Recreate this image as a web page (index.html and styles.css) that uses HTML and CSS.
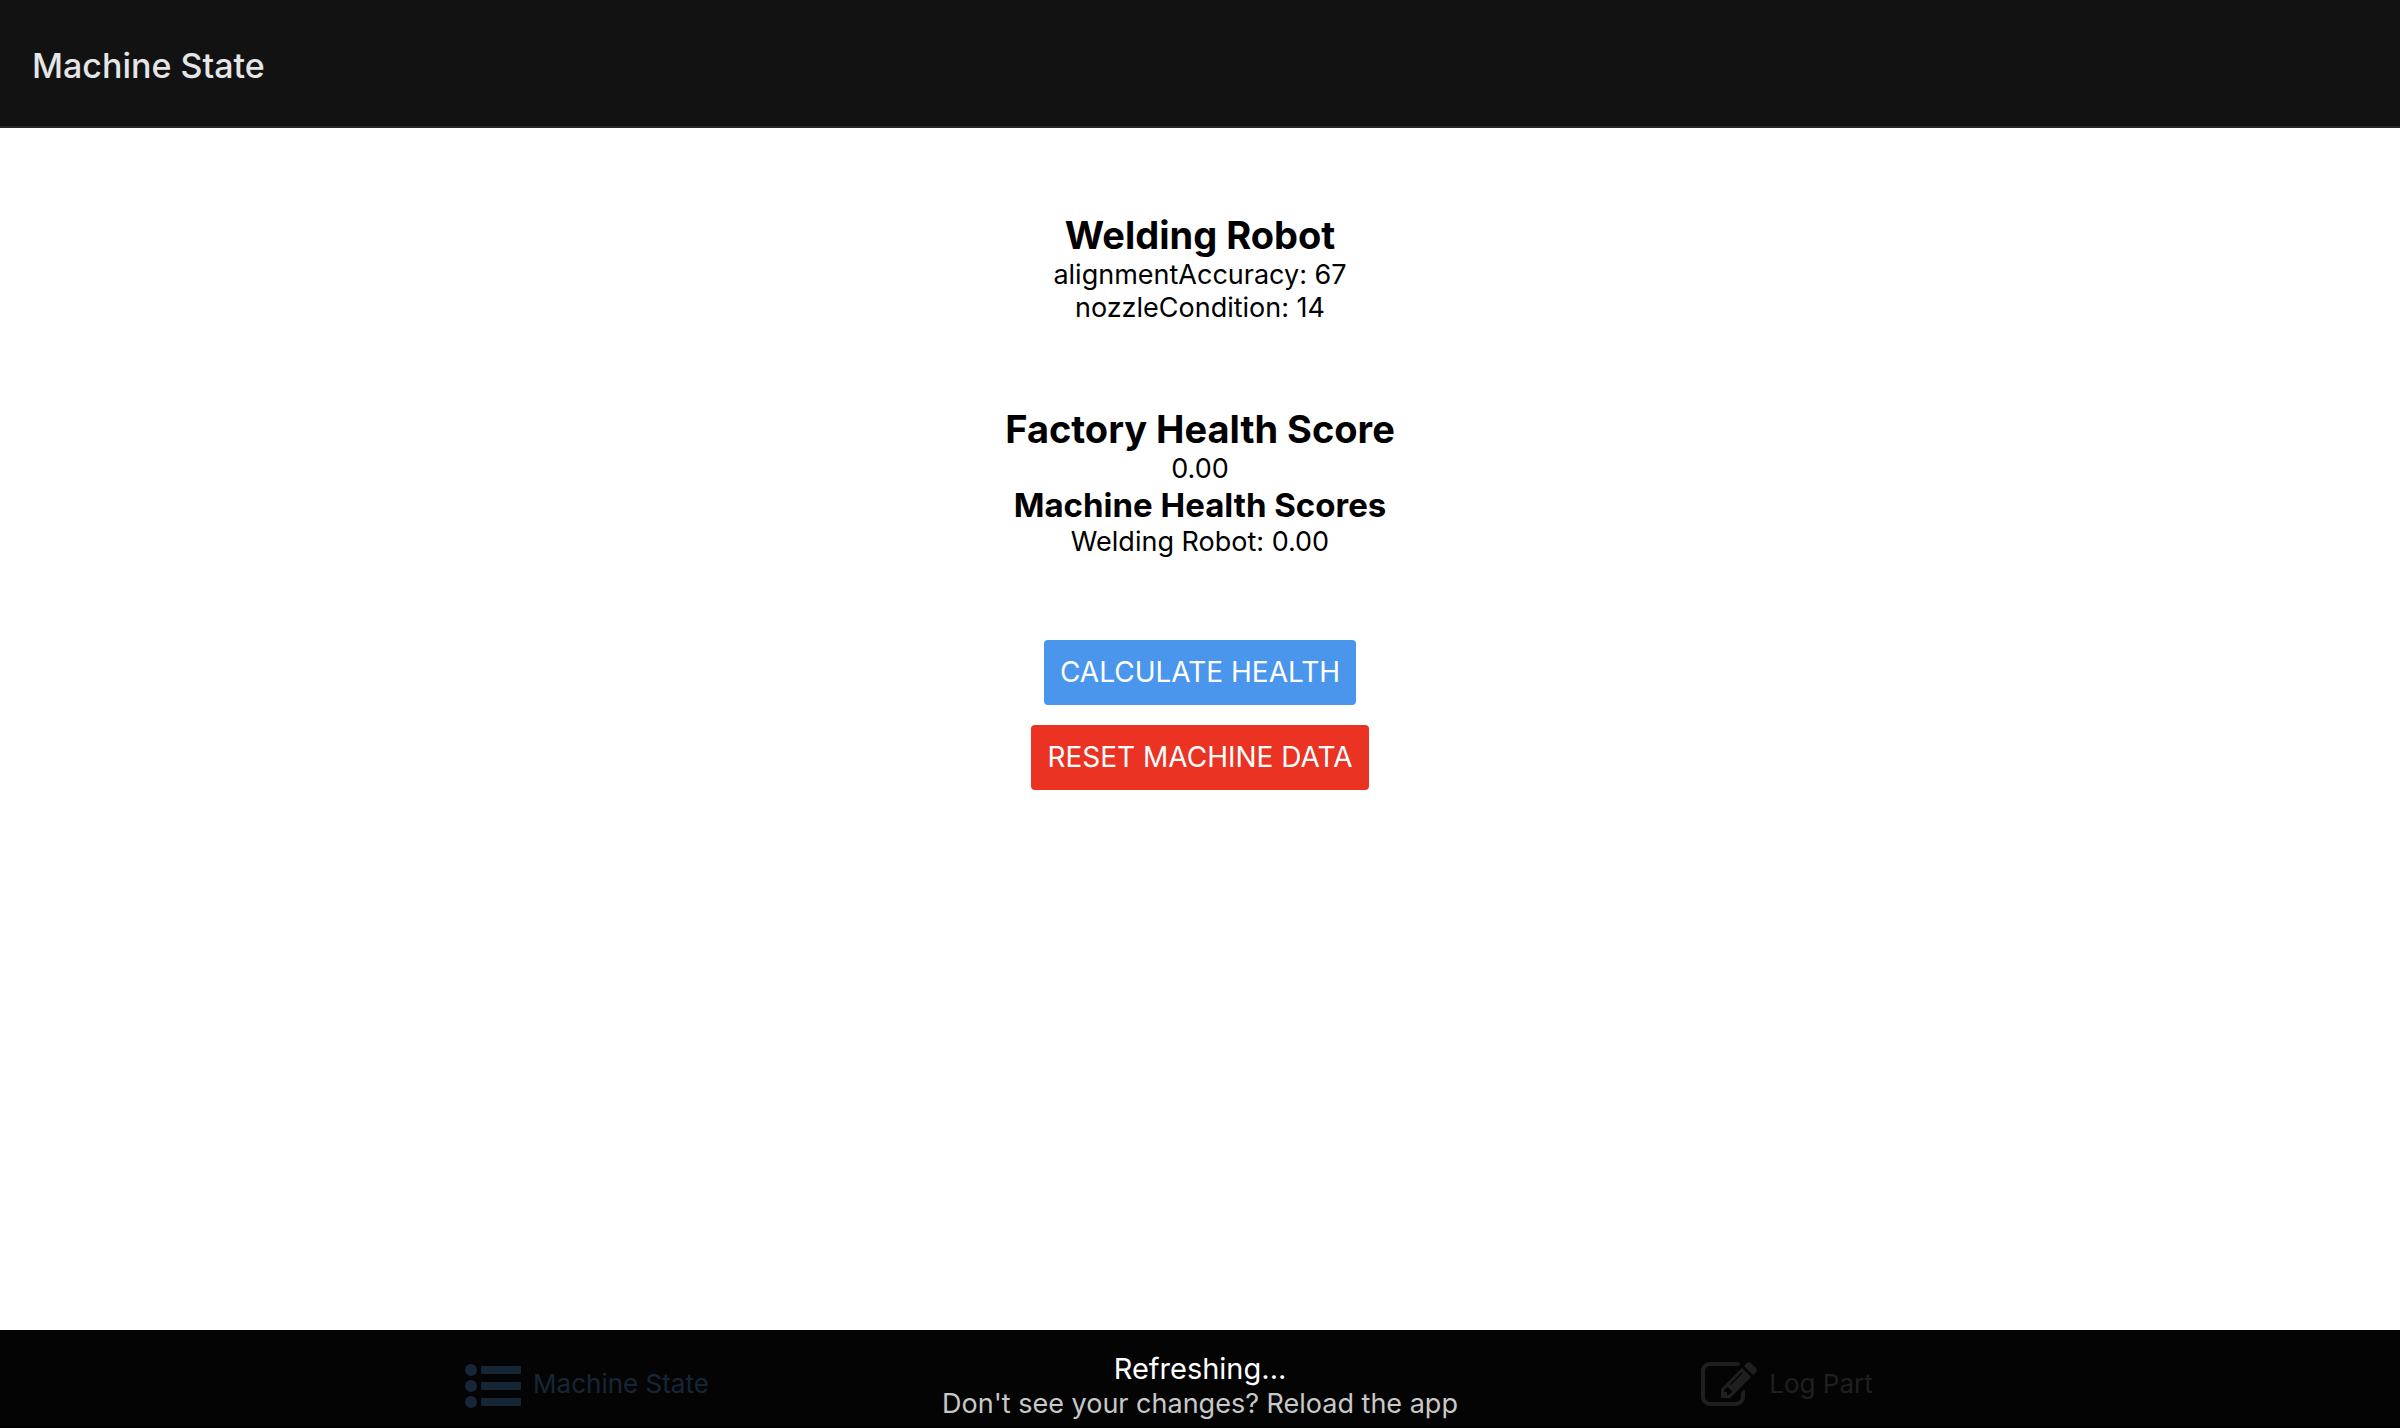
FILE: index.html
```html
<!DOCTYPE html>
<html lang="en">
<head>
<meta charset="utf-8">
<title>Machine State</title>
<link rel="stylesheet" href="styles.css">
</head>
<body>
<div class="app">
  <header class="header"><h1 class="header-title">Machine State</h1></header>
  <main class="content">
    <section class="block">
      <h2 class="heading">Welding Robot</h2>
      <p class="line">alignmentAccuracy: 67</p>
      <p class="line">nozzleCondition: 14</p>
    </section>
    <section class="block">
      <h2 class="heading">Factory Health Score</h2>
      <p class="line">0.00</p>
      <h3 class="subheading">Machine Health Scores</h3>
      <p class="line">Welding Robot: 0.00</p>
    </section>
    <div class="actions">
      <button type="button" class="button button-primary">CALCULATE HEALTH</button>
      <button type="button" class="button button-danger">RESET MACHINE DATA</button>
    </div>
  </main>
  <footer class="footer">
    <nav class="tabs">
      <a class="tab tab-active" href="#state">
        <svg class="tab-icon" viewBox="0 0 1792 1792" aria-hidden="true"><circle cx="192" cy="384" r="192"/><circle cx="192" cy="896" r="192"/><circle cx="192" cy="1408" r="192"/><rect x="512" y="256" width="1280" height="256" rx="32"/><rect x="512" y="768" width="1280" height="256" rx="32"/><rect x="512" y="1280" width="1280" height="256" rx="32"/></svg>
        <span class="tab-label">Machine State</span>
      </a>
      <a class="tab" href="#log">
        <svg class="tab-icon" viewBox="0 0 1792 1792" aria-hidden="true"><path d="M888 1184l116-116-152-152-116 116v56h96v96h56zm440-720q-16-16-33 1l-350 350q-17 17-1 33t33-1l350-350q17-17 1-33zm80 594v190q0 119-84.500 203.500t-203.500 84.500h-832q-119 0-203.500-84.500t-84.500-203.500v-832q0-119 84.500-203.500t203.500-84.500h832q63 0 117 25 15 7 18 23 3 17-9 29l-49 49q-14 14-32 8-23-6-45-6h-832q-66 0-113 47t-47 113v832q0 66 47 113t113 47h832q66 0 113-47t47-113v-126q0-13 9-22l64-64q15-15 35-7t20 29zm-96-738l288 288-672 672h-288v-288zm444 132l-92 92-288-288 92-92q28-28 68-28t68 28l152 152q28 28 28 68t-28 68z"/></svg>
        <span class="tab-label">Log Part</span>
      </a>
    </nav>
    <div class="toast" role="status">
      <p class="toast-title">Refreshing...</p>
      <p class="toast-text">Don't see your changes? Reload the app</p>
    </div>
  </footer>
</div>
</body>
</html>
```
FILE: styles.css
```css
* {
  box-sizing: border-box;
}

body {
  margin: 0;
  background: #fff;
  color: #000;
  font-family: Inter, "Liberation Sans", sans-serif;
}

h1, h2, h3, p {
  margin: 0;
}

.app {
  display: flex;
  flex-direction: column;
  min-height: 100vh;
}

.header {
  display: flex;
  align-items: center;
  padding: 44px 32px 38px;
  background: #121212;
  border-bottom: 2px solid #272729;
}

.header-title {
  color: #e5e5e7;
  font-size: 34px;
  line-height: 44px;
  font-weight: 500;
}

.content {
  flex: 1;
  display: flex;
  flex-direction: column;
  align-items: center;
  gap: 82px;
  padding-top: 84px;
  text-align: center;
}

.heading {
  font-size: 38px;
  line-height: 46px;
  font-weight: 700;
}

.subheading {
  font-size: 33px;
  line-height: 40px;
  font-weight: 700;
}

.line {
  font-size: 27px;
  line-height: 33px;
}

.actions {
  display: flex;
  flex-direction: column;
  align-items: center;
  gap: 20px;
}

.button {
  padding: 16px;
  border: 0;
  border-radius: 4px;
  color: #fff;
  font: 400 28px/33px Inter, "Liberation Sans", sans-serif;
}

.button-primary {
  background: #4a96ed;
}

.button-danger {
  background: #ea3323;
}

.footer {
  position: relative;
  background: #121212;
  border-bottom: 2px solid #000;
}

.tabs {
  display: grid;
  grid-template-columns: 1fr 1fr;
}

.tab {
  display: flex;
  align-items: center;
  justify-content: center;
  gap: 12px;
  padding: 28px 26px 12px 0;
  color: #7c7c7d;
  text-decoration: none;
}

.tab-active {
  color: #5898d8;
}

.tab-icon {
  width: 56px;
  height: 56px;
  fill: currentColor;
}

.tab-label {
  padding-bottom: 4px;
  font-size: 26px;
  line-height: 32px;
}

.toast {
  position: absolute;
  inset: 0;
  padding-top: 20px;
  background: rgba(0, 0, 0, 0.75);
  text-align: center;
}

.toast-title {
  color: #fff;
  font-size: 29px;
  line-height: 37px;
}

.toast-text {
  color: #c8c8c8;
  font-size: 27px;
  line-height: 33px;
}
```
